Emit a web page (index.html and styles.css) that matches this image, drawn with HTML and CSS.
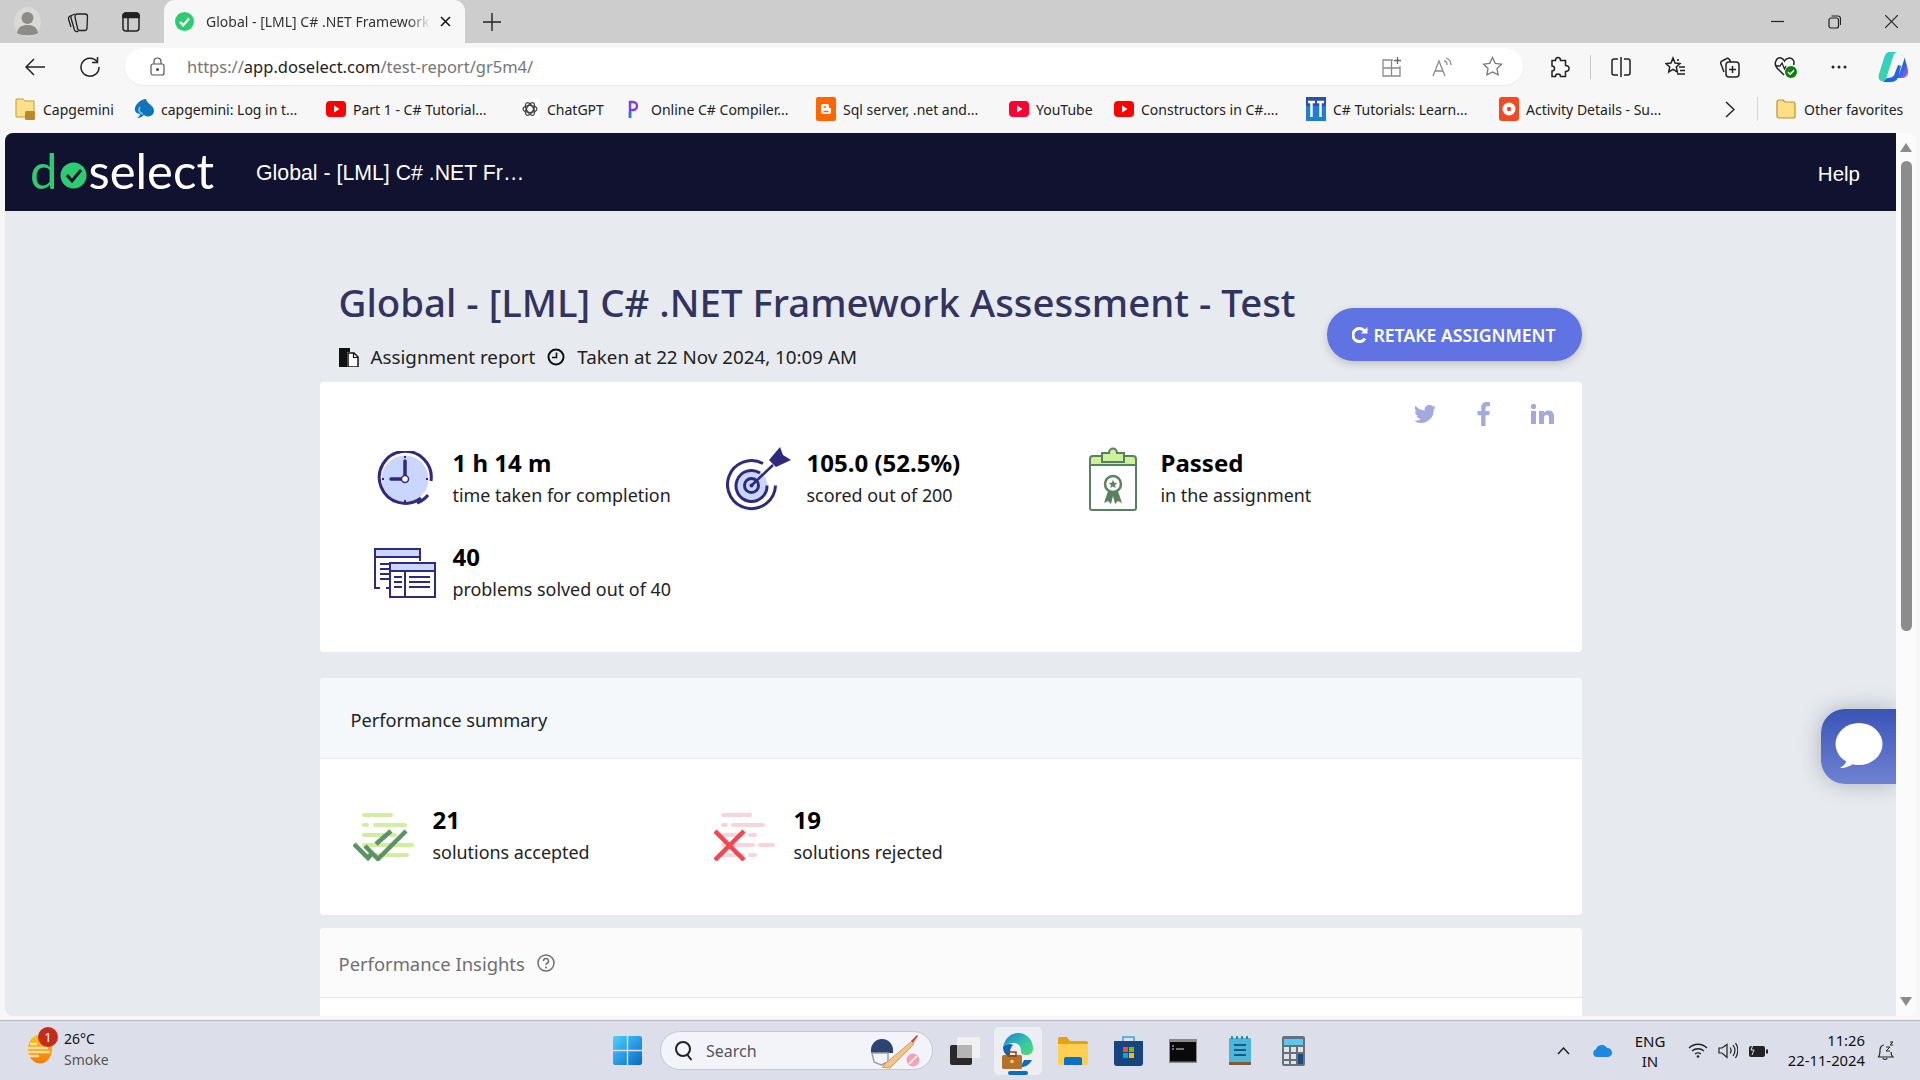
FILE: index.html
```html
<!DOCTYPE html>
<html lang="en">
<head>
  <meta charset="UTF-8" />
  <title>Global - [LML] C# .NET Framework Assessment - Test</title>
  <link rel="stylesheet" href="styles.css">
</head>
<body>
  <!-- browser chrome -->
  <div class="tabstrip">
    <svg class="ts-profile" width="27" height="30" viewBox="0 0 27 30"><ellipse cx="13.5" cy="15" rx="13.5" ry="15" fill="#d9d9d7"/><circle cx="13.5" cy="11" r="6" fill="#8d8c88"/><path d="M3 26c1-6 5-8 10.500-8s9.500 2 10.500 8c-3 3-18 3-21 0z" fill="#8d8c88"/></svg>
    <svg class="ts-coll" width="22" height="22" viewBox="0 0 22 22" fill="none" stroke="#222" stroke-width="1.300"><path d="M10 3h8a2.500 2.500 0 0 1 2.500 2.500L20 17a2.500 2.500 0 0 1-2.500 2.500H13A2.500 2.500 0 0 1 10.500 17L8 6a2.500 2.500 0 0 1 2-3z"/><path d="M8 3 5.500 4A2.500 2.500 0 0 0 4 7l3.500 12a2.500 2.500 0 0 0 3 1.500l1-.5"/><path d="M4 4.500 2.500 5.500A2.500 2.500 0 0 0 1.500 8l2.500 8"/></svg>
    <svg class="ts-vert" width="18" height="20" viewBox="0 0 18 20" fill="none" stroke="#222" stroke-width="1.500"><rect x="1" y="1" width="16" height="18" rx="3"/><path d="M6 5.500V19"/><path d="M1 4a3 3 0 0 1 3-3h10a3 3 0 0 1 3 3v1.500H1z" fill="#222"/></svg>
    <div class="tab">
      <svg width="19" height="19" viewBox="0 0 19 19"><circle cx="9.500" cy="9.500" r="9.500" fill="#2ecc71"/><path d="m5 10 3.200 3.200L14 6.500" fill="none" stroke="#fff" stroke-width="2.400"/></svg>
      <span class="tab-title">Global - [LML] C# .NET Framework</span>
      <svg width="11" height="11" viewBox="0 0 11 11" stroke="#111" stroke-width="1.500"><path d="m1 1 9 9M10 1l-9 9"/></svg>
    </div>
    <svg class="ts-plus" width="18" height="18" viewBox="0 0 18 18" stroke="#222" stroke-width="1.400"><path d="M9 0v18M0 9h18"/></svg>
    <div class="win-btns">
      <svg width="13" height="13" viewBox="0 0 13 13" stroke="#222" stroke-width="1.200"><path d="M0 6.500h13"/></svg>
      <svg width="13" height="14" viewBox="0 0 13 14" fill="none" stroke="#222" stroke-width="1.200"><rect x="1" y="3" width="9.500" height="10" rx="2"/><path d="M3.500 1H10a2.500 2.500 0 0 1 2.500 2.500V10"/></svg>
      <svg width="13" height="13" viewBox="0 0 13 13" stroke="#222" stroke-width="1.200"><path d="m0 0 13 13M13 0 0 13"/></svg>
    </div>
  </div>

  <div class="toolbar">
    <svg class="tb-back" width="20" height="18" viewBox="0 0 20 18" fill="none" stroke="#222" stroke-width="1.500"><path d="M20 9H1M9 1 1 9l8 8"/></svg>
    <svg class="tb-reload" width="20" height="20" viewBox="0 0 20 20" fill="none" stroke="#222" stroke-width="1.500"><path d="M17 4.500A9 9 0 1 0 19 10"/><path d="M17.500 0v5.500H12"/></svg>
    <div class="address">
      <svg width="15" height="19" viewBox="0 0 15 19" fill="none" stroke="#555" stroke-width="1.200"><rect x="1" y="7" width="13" height="11" rx="2"/><path d="M4 7V4.500a3.500 3.500 0 0 1 7 0V7"/><circle cx="7.500" cy="12.500" r="1" fill="#555"/></svg>
      <span class="url">https://<b>app.doselect.com</b>/test-report/gr5m4/</span>
      <div class="addr-tools">
        <svg width="20" height="20" viewBox="0 0 20 20" fill="none" stroke="#8a8a8a" stroke-width="1.300"><path d="M11 3H1v16h17V9M1 11h17M9.500 3v16"/><path d="M15.500 0v7M12 3.500h7" stroke="#666"/></svg>
        <svg width="20" height="20" viewBox="0 0 20 20" fill="none" stroke="#8a8a8a" stroke-width="1.300"><path d="m1 19 6-15 6 15M3 14h8"/><path d="M12 4c2 0 3 2 3 4M14 1c3 1 5 4 5 7"/></svg>
        <svg width="21" height="21" viewBox="0 0 21 21" fill="none" stroke="#777" stroke-width="1.300"><path d="m10.500 1.500 2.800 5.800 6.200.9-4.500 4.400 1.100 6.300-5.600-3-5.600 3 1.100-6.300L1.500 8.200l6.200-.9z"/></svg>
      </div>
    </div>
    <div class="tb-tools">
      <svg width="20" height="22" viewBox="0 0 20 22" fill="none" stroke="#222" stroke-width="1.500"><path d="M8 1.500c2 0 2.500 1.500 2.500 3h5v5c2.500 0 3.500 1 3.500 3s-1 3-3.500 3v5h-5c0-1.500-1-2.500-2.500-2.500s-2.500 1-2.500 2.500H2V15c1.500 0 2.500-1 2.500-2.500S3.500 10 2 10V4.500h3.500c0-1.500.5-3 2.500-3z"/></svg>
      <span class="tb-sep"></span>
      <svg width="20" height="20" viewBox="0 0 20 20" fill="none" stroke="#222" stroke-width="1.500"><path d="M10 0v20M7 2H3a2 2 0 0 0-2 2v12a2 2 0 0 0 2 2h4M13 2h4a2 2 0 0 1 2 2v12a2 2 0 0 1-2 2h-4"/></svg>
      <svg width="21" height="21" viewBox="0 0 21 21" fill="none" stroke="#222" stroke-width="1.500"><path d="m8 2 2 5 5 .6-3.700 3.400 1 5-4.300-2.600L3.700 16l1-5L1 7.600 6 7z"/><path d="M14 11h6M15 14.500h5M12 18h8M12 4h2"/></svg>
      <svg width="20" height="22" viewBox="0 0 20 22" fill="none" stroke="#222" stroke-width="1.500"><rect x="6" y="6" width="13" height="15" rx="3"/><path d="M12.500 10v7M9 13.500h7M6 3 2 5a2 2 0 0 0-1 3l3 8M6 3a2 2 0 0 1 3 0l2 3"/></svg>
      <svg width="23" height="22" viewBox="0 0 23 22" fill="none"><path d="M10 19 3 12C-1 7 3 1 7 2c2 .5 3 2 3.500 3C11 4 12 2.500 15 2c4-.5 6 4 4.500 7" stroke="#222" stroke-width="1.500"/><path d="M2 10h4l2-3 2.500 6 1.500-3" stroke="#222" stroke-width="1.300"/><circle cx="17" cy="16" r="6" fill="#107c10"/><path d="m14 16 2.200 2.200 3.800-4" stroke="#fff" stroke-width="1.500"/></svg>
      <svg width="16" height="4" viewBox="0 0 16 4" fill="#222"><circle cx="2" cy="2" r="1.500"/><circle cx="8" cy="2" r="1.500"/><circle cx="14" cy="2" r="1.500"/></svg>
      <svg class="tb-copilot" width="30" height="32" viewBox="0 0 30 32"><defs><linearGradient id="cpa" x1="0" y1="0" x2="1" y2="1"><stop offset="0" stop-color="#2cc3ee"/><stop offset=".55" stop-color="#3ad7a5"/><stop offset="1" stop-color="#1a78e0"/></linearGradient><linearGradient id="cpb" x1="0" y1="0" x2="1" y2="1"><stop offset="0" stop-color="#1f7ce0"/><stop offset=".6" stop-color="#2a5fe6"/><stop offset="1" stop-color="#b86be0"/></linearGradient></defs><path d="M20 3c4 0 6 2 7 5l3 11c1 5-2 8-6 8h-9c4 0 6-3 7-6l4-12c1-3-1-6-6-6z" fill="url(#cpb)"/><path d="M11 1h10c-4 0-5 2-6 5L9 25c-1 4-3 6-6 5-2-1-3-3-2-7L6 7c1-4 3-6 5-6z" fill="url(#cpa)"/><path d="M9 27c4 0 7-1 8-5l3-8 3 1-2 8c-1 5-3 8-8 8H5z" fill="#1e66dc"/></svg>
    </div>
  </div>

  <div class="favbar">
    <a class="fav"><svg width="21" height="24" viewBox="0 0 21 24"><path d="M1 2h7l2 2h9v16H1z" fill="#ffe08a" stroke="#c59a2d"/><rect x="10" y="14" width="10" height="9" rx="1.500" fill="#b98a2c"/></svg>Capgemini</a>
    <a class="fav"><svg width="20" height="20" viewBox="0 0 20 20"><path d="M12 0c1 5 8 6 8 12a6 6 0 0 1-10 4c-2 2-4 3-7 3 2-1 3-3 3-4-3 0-6-3-5-6 1-5 7-9 11-9z" fill="#0f74b8"/><path d="M9 15c-4-1-5-4-3-7" stroke="#62c0e8" stroke-width="2" fill="none"/></svg>capgemini: Log in t...</a>
    <a class="fav"><svg width="20" height="16" viewBox="0 0 20 16"><rect width="20" height="16" rx="4" fill="#f00"/><path d="m8 4.500 5.500 3.500L8 11.500z" fill="#fff"/></svg>Part 1 - C# Tutorial...</a>
    <a class="fav"><svg width="20" height="20" viewBox="0 0 20 20" fill="none" stroke="#444" stroke-width="1.200"><rect width="20" height="20" rx="3" fill="#fff" stroke="none"/><circle cx="10" cy="10" r="3.500"/><ellipse cx="10" cy="10" rx="7" ry="3.500"/><ellipse cx="10" cy="10" rx="7" ry="3.500" transform="rotate(60 10 10)"/><ellipse cx="10" cy="10" rx="7" ry="3.500" transform="rotate(120 10 10)"/></svg>ChatGPT</a>
    <a class="fav fav-p"><svg width="12" height="20" viewBox="0 0 12 20" fill="none" stroke-width="2.400"><path d="M3 19V3h3a3.500 3.500 0 0 1 0 8H3" stroke="#7a3cf0"/><path d="M3 19v-6" stroke="#2c6cf0"/></svg>Online C# Compiler...</a>
    <a class="fav"><svg width="20" height="24" viewBox="0 0 20 24"><rect width="20" height="24" rx="2" fill="#f60"/><path d="M6 7h5a2 2 0 0 1 2 2v2h1a1 1 0 0 1 1 1v3a2 2 0 0 1-2 2H7a2 2 0 0 1-2-2V8z" fill="#fff"/><path d="M7.500 10H10M7.500 14.500h5" stroke="#f60" stroke-width="1.500"/></svg>Sql server, .net and...</a>
    <a class="fav"><svg width="20" height="16" viewBox="0 0 20 16"><rect width="20" height="16" rx="4" fill="#f03"/><path d="m8 4.500 5.500 3.500L8 11.500z" fill="#fff"/></svg>YouTube</a>
    <a class="fav"><svg width="20" height="16" viewBox="0 0 20 16"><rect width="20" height="16" rx="4" fill="#f00"/><path d="m8 4.500 5.500 3.500L8 11.500z" fill="#fff"/></svg>Constructors in C#....</a>
    <a class="fav"><svg width="20" height="24" viewBox="0 0 20 24"><rect width="20" height="24" fill="#1e7fd0"/><rect width="20" height="9" fill="#2a4fa8"/><path d="M2 5h7M5.500 5v15M11 5h7M14.500 5v15" stroke="#fff" stroke-width="2.400"/></svg>C# Tutorials: Learn...</a>
    <a class="fav"><svg width="20" height="24" viewBox="0 0 20 24"><rect width="20" height="24" rx="3" fill="#ee4b24"/><circle cx="10" cy="12" r="6.500" fill="#fff"/><circle cx="10" cy="12" r="2.200" fill="#ee4b24"/></svg>Activity Details - Su...</a>
    <svg class="fav-more" width="10" height="17" viewBox="0 0 10 17" fill="none" stroke="#222" stroke-width="1.500"><path d="m1 1 8 7.500L1 16"/></svg>
    <span class="fav-sep"></span>
    <a class="fav fav-other"><svg width="20" height="20" viewBox="0 0 20 20"><path d="M1 3a2 2 0 0 1 2-2h4l2 2h8a2 2 0 0 1 2 2v12a2 2 0 0 1-2 2H3a2 2 0 0 1-2-2z" fill="#ffdf85" stroke="#bf9226" stroke-width="1.200"/></svg>Other favorites</a>
  </div>

  <!-- the page -->
  <div class="viewport">
    <div class="page">
      <header class="nav">
        <div class="logo"><span class="logo-d">d</span><svg class="logo-o" width="27" height="27" viewBox="0 0 27 27"><circle cx="13.500" cy="13.500" r="13" fill="#2ecc71"/><path d="m7 13 5 6 9-11" fill="none" stroke="#10122f" stroke-width="3"/></svg><span>select</span></div>
        <div class="nav-title">Global - [LML] C# .NET Fr…</div>
        <div class="nav-help">Help</div>
      </header>

      <main class="content">
        <div class="report-head">
          <div>
            <h1>Global - [LML] C# .NET Framework Assessment - Test</h1>
            <div class="meta">
              <svg width="20" height="20" viewBox="0 0 20 20"><path d="M0 1h11v4H8v15H0z" fill="#111"/><path d="M9 6h6l4 4v10H9z" fill="#fff" stroke="#111" stroke-width="1.500"/><path d="M14.500 6v4.500H19" fill="none" stroke="#111" stroke-width="1.200"/></svg>
              <span>Assignment report</span>
              <svg class="meta-clock" width="18" height="18" viewBox="0 0 18 18" fill="none" stroke="#111" stroke-width="2"><circle cx="9" cy="9" r="7.500"/><path d="M9.500 4.500V9.500H5" stroke-width="1.600"/></svg>
              <span>Taken at 22 Nov 2024, 10:09 AM</span>
            </div>
          </div>
          <button class="retake"><svg width="16" height="18" viewBox="0 0 16 18" fill="none" stroke="#fff" stroke-width="3"><path d="M13 12.500A6.500 6.500 0 1 1 12.500 5"/><path d="M15.500 1v6.500H9" fill="#fff" stroke="none"/></svg>RETAKE ASSIGNMENT</button>
        </div>

        <section class="card stats-card">
          <div class="socials">
            <svg width="22" height="18" viewBox="0 0 22 18" fill="#a3a9de"><path d="M22 2.100c-.8.400-1.700.6-2.600.7.900-.6 1.600-1.400 2-2.500-.9.500-1.800.9-2.900 1.100A4.500 4.500 0 0 0 10.800 5.600C7.100 5.400 3.800 3.600 1.500.8c-1.200 2-.6 4.700 1.400 6-.7 0-1.400-.2-2-.6 0 2.200 1.500 4.100 3.600 4.500-.7.200-1.400.2-2 .1.600 1.800 2.200 3.100 4.200 3.100A9 9 0 0 1 0 15.800 12.800 12.800 0 0 0 19.700 4.500c.9-.6 1.700-1.400 2.300-2.400z"/></svg>
            <svg width="13" height="24" viewBox="0 0 13 24" fill="#a3a9de"><path d="M8.500 24V13.300h3.700l.6-4.300H8.500V6.400c0-1.200.4-2.100 2.100-2.100H13V.4C12.500.3 11.200 0 9.700 0 6.400 0 4.200 2 4.200 5.800V9H.5v4.300h3.700V24z"/></svg>
            <svg width="23" height="20" viewBox="0 0 23 20" fill="#a3a9de"><rect x="0" y="7" width="5" height="13"/><circle cx="2.500" cy="2.500" r="2.600"/><path d="M8 7h4.800v2c.8-1.300 2.300-2.400 4.600-2.400 4.300 0 5.600 2.700 5.600 6.700V20h-5v-6c0-1.800-.4-3.300-2.300-3.300S13 12.200 13 14v6H8z"/></svg>
          </div>
          <div class="stats">
            <div class="stat">
              <svg class="stat-icon" width="56" height="56" viewBox="0 0 56 56" fill="none">
                <circle cx="28" cy="28" r="23.500" fill="#cbd6ff"/>
                <path d="M44 47A26 26 0 1 1 54 30" stroke="#2f2a7c" stroke-width="3"/>
                <path d="M40 52a26 26 0 0 0 11-8" stroke="#2f2a7c" stroke-width="3"/>
                <path d="M28 10v14M14 28h10" stroke="#2f2a7c" stroke-width="3.500" stroke-linecap="round"/>
                <circle cx="28" cy="28" r="3.500" fill="#fff" stroke="#2f2a7c" stroke-width="1.500"/>
                <path d="M28 5v2M28 49v2M5 28h2M49 28h2" stroke="#2f2a7c" stroke-width="2"/>
              </svg>
              <div class="stat-text"><strong>1 h 14 m</strong><span>time taken for completion</span></div>
            </div>
            <div class="stat">
              <svg class="stat-icon" width="66" height="66" viewBox="0 0 66 66" fill="none">
                <circle cx="25.500" cy="39.500" r="16" fill="#cbd6ff"/>
                <path d="M37 17.500A24 24 0 1 0 49.500 39.500" stroke="#2f2a7c" stroke-width="3"/>
                <path d="M34 27A15.500 15.500 0 1 0 41 39.500" stroke="#2f2a7c" stroke-width="3"/>
                <circle cx="25.500" cy="39.500" r="7" fill="#cbd6ff" stroke="#2f2a7c" stroke-width="3"/>
                <circle cx="25.500" cy="39.500" r="2" fill="#2f2a7c"/>
                <path d="M25.500 39.500 47 19" stroke="#2f2a7c" stroke-width="2.500"/>
                <path d="M43 14 54 1l3 8 8 5-15 7z" fill="#2f2a7c"/>
              </svg>
              <div class="stat-text"><strong>105.0 (52.5%)</strong><span>scored out of 200</span></div>
            </div>
            <div class="stat">
              <svg class="stat-icon" width="48" height="64" viewBox="0 0 48 64" fill="none" stroke="#5a8060" stroke-width="2">
                <path d="M1 18V12a3 3 0 0 1 3-3h40a3 3 0 0 1 3 3v6z" fill="#cff09b"/>
                <path d="M13 15V6h7c0-6 8-6 8 0h7v9z" fill="#cff09b"/>
                <path d="M1 18v43a2 2 0 0 0 2 2h42a2 2 0 0 0 2-2V18"/>
                <circle cx="24" cy="37" r="8" stroke-width="2.500"/>
                <path d="m24 33 1.300 2.800 3 .3-2.300 2 .7 3-2.700-1.600-2.700 1.600.7-3-2.300-2 3-.3z" fill="#5a8060" stroke="none"/>
                <path d="m19 44-4 12 4-2 3 3 2-8 2 8 3-3 4 2-4-12" fill="#5a8060" stroke="none"/>
              </svg>
              <div class="stat-text"><strong>Passed</strong><span>in the assignment</span></div>
            </div>
            <div class="stat">
              <svg class="stat-icon" width="62" height="50" viewBox="0 0 62 50" fill="none" stroke="#2f2a7c" stroke-width="2">
                <path d="M46 13V1H1v39h5M12 40h3" />
                <rect x="2" y="2" width="43" height="7" fill="#cbd6ff" stroke="none"/>
                <path d="M1 9h45M6 16h9M6 21h9M6 26h9M6 31h9"/>
                <path d="M61 40v9H16V15h45v29" fill="#fff"/>
                <rect x="17" y="16" width="43" height="7" fill="#cbd6ff" stroke="none"/>
                <path d="M16 23h45M31 23v26M20 29h8M20 34h8M20 39h8M35 29h21M35 34h21M35 39h21"/>
              </svg>
              <div class="stat-text"><strong>40</strong><span>problems solved out of 40</span></div>
            </div>
          </div>
        </section>

        <section class="card summary-card">
          <div class="card-head">Performance summary</div>
          <div class="summary">
            <div class="stat">
              <svg class="sum-icon" width="62" height="48" viewBox="0 0 62 48" fill="none" stroke="#d0ee9f" stroke-width="4" stroke-linecap="round">
                <path d="M11 2h27M11 12h3M22 12h30M11 22h20M38 22h4M11 32h48M11 42h4M24 42h30M44 42h6"/>
                <path d="M1 31l14 14 5-6M12 33l13 13 28-28M23 31l15-13" stroke="#5c9265" stroke-width="4.500" stroke-linecap="butt"/>
              </svg>
              <div class="stat-text"><strong>21</strong><span>solutions accepted</span></div>
            </div>
            <div class="stat">
              <svg class="sum-icon" width="62" height="48" viewBox="0 0 62 48" fill="none" stroke="#f8d5dd" stroke-width="4" stroke-linecap="round">
                <path d="M9 2h27M9 12h3M19 12h30M9 22h20M36 22h5M9 32h30M46 32h13M9 42h20M36 42h5"/>
                <path d="M1 18l29 29M30 18 1 47" stroke="#f2474f" stroke-width="4.500" stroke-linecap="butt"/>
              </svg>
              <div class="stat-text"><strong>19</strong><span>solutions rejected</span></div>
            </div>
          </div>
        </section>

        <section class="card insights-card">
          <div class="insights-head">Performance Insights
            <svg width="18" height="18" viewBox="0 0 18 18" fill="none" stroke="#6f6f6f" stroke-width="1.500"><circle cx="9" cy="9" r="8"/><path d="M6.500 7a2.500 2.500 0 1 1 3.500 2.300c-.7.300-1 .8-1 1.700"/><circle cx="9" cy="13.500" r="1" fill="#6f6f6f" stroke="none"/></svg>
          </div>
          <div class="insights-body"></div>
        </section>
      </main>

      <div class="chat"><svg width="48" height="46" viewBox="0 0 48 46"><ellipse cx="24" cy="21" rx="23.500" ry="21" fill="#fff"/><path d="M12 34c0 5-2 8-7 11 6 0 12-2 16-7z" fill="#fff"/></svg></div>
    </div>
    <div class="scrollbar">
      <span class="sb-up"></span>
      <span class="sb-thumb"></span>
      <span class="sb-down"></span>
    </div>
  </div>

  <!-- windows taskbar -->
  <footer class="taskbar">
    <div class="weather">
      <div class="weather-icon">
        <svg width="28" height="30" viewBox="0 0 28 30"><defs><linearGradient id="sun" x1="0" y1="0" x2="0" y2="1"><stop offset="0" stop-color="#ffc814"/><stop offset="1" stop-color="#f57a0a"/></linearGradient></defs><ellipse cx="15" cy="15" rx="12" ry="14.500" fill="url(#sun)"/><path d="M5 10h7M1 18h24M3 14h20M2 22h12" stroke="#f6dca6" stroke-width="2.500"/></svg>
        <span class="weather-badge">1</span>
      </div>
      <div class="weather-text"><span>26°C</span><span class="weather-sub">Smoke</span></div>
    </div>
    <div class="task-icons">
      <svg width="29" height="29" viewBox="0 0 29 29"><defs><linearGradient id="win" x1="0" y1="0" x2="1" y2="1"><stop offset="0" stop-color="#4dd0ff"/><stop offset="1" stop-color="#0669c9"/></linearGradient></defs><path d="M0 2a2 2 0 0 1 2-2h11.800v13.800H0zM15.200 0H27a2 2 0 0 1 2 2v11.800H15.200zM0 15.200h13.800V29H2a2 2 0 0 1-2-2zM15.200 15.200H29V27a2 2 0 0 1-2 2H15.200z" fill="url(#win)"/></svg>
      <div class="search">
        <svg width="18" height="20" viewBox="0 0 18 20" fill="none" stroke="#222" stroke-width="2"><circle cx="8" cy="8" r="7"/><path d="m12.500 14 4 5"/></svg>
        <span>Search</span>
        <svg class="search-art" width="50" height="36" viewBox="0 0 50 36"><path d="M1 17a11 11 0 0 1 22 0v3H1z" fill="#2d4373"/><path d="M2 20h16v9l-7 3-7-3z" fill="none" stroke="#a0a0a0" stroke-width="1.500"/><path d="M12 34 16 30 42 8l2 3-24 24z" fill="#f0c48a" stroke="#d99a55"/><path d="m41 8 6-6 1 1-5 7z" fill="#c84a3a"/><circle cx="43" cy="27" r="6.500" fill="#f4a3b4"/><path d="m39 31 8-8" stroke="#fff" stroke-width="1.500"/></svg>
      </div>
      <svg width="30" height="28" viewBox="0 0 30 28"><rect x="7" y="0" width="23" height="21" rx="2" fill="#f3f3f3" opacity=".9"/><rect x="0" y="8" width="22" height="20" rx="2" fill="#2a2a2a"/><rect x="7" y="8" width="15" height="13" fill="#b5b5b5"/></svg>
      <div class="task-active">
        <svg width="32" height="36" viewBox="0 0 32 36"><defs><linearGradient id="edge" x1="0" y1="0" x2="1" y2="1"><stop offset="0" stop-color="#1b7fd4"/><stop offset=".6" stop-color="#37c9a7"/><stop offset="1" stop-color="#59d66b"/></linearGradient></defs><path d="M1 14C3 5 9 0 16 0c9 0 15 7 15 15 0 5-3 7-6 7-4 0-6-1-6-4 0-5-3-8-7-8-5 0-9 2-11 4z" fill="url(#edge)"/><path d="M1 14c3-3 7-4 10-2-3 3-4 8-2 13-5-2-8-6-8-11z" fill="#1264b3"/><path d="M22 27h8c-3 6-9 8-14 7 3-1 5-4 6-7z" fill="#0f6cbd"/><rect x="0" y="22" width="20" height="14" rx="1.500" fill="#b5722a"/><rect x="6" y="19" width="8" height="4" fill="none" stroke="#7d4a18" stroke-width="1.500"/><rect x="8.500" y="27" width="3" height="3" fill="#f3d27a"/></svg>
        <span class="task-dot"></span>
      </div>
      <svg width="30" height="28" viewBox="0 0 30 28"><path d="M0 2a2 2 0 0 1 2-2h7l3 4h16a2 2 0 0 1 2 2v4H0z" fill="#e5a210"/><path d="M0 7h30v19a2 2 0 0 1-2 2H2a2 2 0 0 1-2-2z" fill="#ffd04f"/><path d="M6 28v-6a2 2 0 0 1 2-2h14a2 2 0 0 1 2 2v6z" fill="#0f6fc4"/></svg>
      <svg width="29" height="30" viewBox="0 0 29 30"><path d="M9 5V1h11v4" fill="none" stroke="#2ea8dc" stroke-width="1.500"/><path d="M0 5h29v22a3 3 0 0 1-3 3H3a3 3 0 0 1-3-3z" fill="#17457f"/><rect x="9" y="11" width="5" height="5" fill="#f25022"/><rect x="15" y="11" width="5" height="5" fill="#7fba00"/><rect x="9" y="17" width="5" height="5" fill="#00a4ef"/><rect x="15" y="17" width="5" height="5" fill="#ffb900"/></svg>
      <svg width="28" height="24" viewBox="0 0 28 24"><rect width="28" height="24" fill="#8a8a8a"/><rect x="1" y="3" width="26" height="19.500" fill="#0a0a0a"/><path d="M3 7h2M3 10h2M7 10h8" stroke="#ddd" stroke-width="1"/></svg>
      <svg class="task-notepad" width="22" height="29" viewBox="0 0 22 29"><rect x="0" y="2" width="22" height="25" rx="1" fill="#4fb6da"/><path d="M3 0v3M8 0v3M13 0v3M18 0v3" stroke="#1d5f8a" stroke-width="1.500"/><path d="M5 9h12M5 14h12M5 19h12" stroke="#155a8a" stroke-width="2"/><rect x="0" y="26" width="22" height="3" fill="#8a5a30"/></svg>
      <svg class="task-calc" width="23" height="30" viewBox="0 0 23 30"><rect width="23" height="30" rx="2" fill="#6a7078"/><rect x="2" y="3" width="19" height="6" fill="#5cc8ee"/><path d="M2 11h5v5H2zM9 11h5v5H9zM2 18h5v5H2zM9 18h5v5H9zM2 25h5v3H2zM9 25h5v3H9zM16 11h5v5h-5z" fill="#dfe3e8"/><rect x="16" y="18" width="5" height="10" fill="#1c4a85"/></svg>
    </div>
    <div class="tray">
      <svg class="tray-up" width="13" height="8" viewBox="0 0 13 8" fill="none" stroke="#222" stroke-width="1.500"><path d="m1 7 5.500-6L12 7"/></svg>
      <svg class="tray-cloud" width="20" height="13" viewBox="0 0 20 13"><path d="M4 13a4 4 0 0 1-1-7.800A6 6 0 0 1 14 4a4.500 4.500 0 0 1 5 4.500A4.500 4.500 0 0 1 15 13z" fill="#1e88e0"/></svg>
      <div class="tray-lang"><span>ENG</span><span>IN</span></div>
      <svg width="20" height="15" viewBox="0 0 20 15" fill="none" stroke="#222" stroke-width="1.300"><path d="M1 5c5-5 13-5 18 0M4 8c3.500-3 8.500-3 12 0M7 11c2-1.500 4-1.500 6 0"/><circle cx="10" cy="13.500" r="1.300" fill="#222" stroke="none"/></svg>
      <svg width="20" height="17" viewBox="0 0 20 17" fill="none" stroke="#222" stroke-width="1.200"><path d="M1 6v5h3l5 4.500v-13L4 6z"/><path d="M12 5.500c1.500 2 1.500 4 0 6M15 3c2.500 3.500 2.500 7.500 0 11M17.500 1c3 4.500 3 10 0 15"/></svg>
      <svg width="20" height="17" viewBox="0 0 20 17"><rect x="1" y="4" width="16" height="11" rx="2" fill="#222"/><rect x="18" y="7.500" width="2" height="4" fill="#222"/><path d="M6 0 3 8h3l-2 5" fill="none" stroke="#dcdfea" stroke-width="1"/></svg>
      <div class="tray-clock"><span>11:26</span><span>22-11-2024</span></div>
      <svg class="tray-bell" width="17" height="20" viewBox="0 0 17 20" fill="none" stroke="#222" stroke-width="1.200"><path d="M1 16c2-1 2-4 2-7 0-3 2-5 4-5M9 16H1M9 16h7c-1-1-2-2-2-5"/><path d="M6 17c0 2 4 2 4 0"/><path d="M9 6h4l-4 4h4M13 1h3l-3 3h3" stroke-width="1"/></svg>
    </div>
  </footer>
</body>
</html>
```

FILE: styles.css
```css
* {
  box-sizing: border-box;
}
body {
  margin: 0;
  width: 1920px;
  height: 1080px;
  overflow: hidden;
  background: #f7f7f7;
  color: #111;
  font-family: "Noto Sans", "Open Sans", sans-serif;
  display: flex;
  flex-direction: column;
}
svg {
  display: block;
  flex: none;
}

/* tab strip */
.tabstrip {
  height: 43px;
  background: #cdcdcd;
  display: flex;
  align-items: center;
}
.ts-profile {
  margin-left: 14px;
}
.ts-coll {
  margin-left: 26px;
}
.ts-vert {
  margin-left: 33px;
}
.tab {
  margin-left: 24px;
  width: 301px;
  height: 43px;
  background: #f7f7f7;
  border-radius: 11px 11px 0 0;
  display: flex;
  align-items: center;
  padding: 0 14px 0 11px;
}
.tab-title {
  flex: 1;
  margin: 0 9px 0 12px;
  font-size: 14px;
  color: #333;
  white-space: nowrap;
  overflow: hidden;
  -webkit-mask-image: linear-gradient(90deg, #000 90%, transparent);
  mask-image: linear-gradient(90deg, #000 90%, transparent);
}
.ts-plus {
  margin-left: 18px;
}
.win-btns {
  margin-left: auto;
  padding-right: 22px;
  display: flex;
  gap: 44px;
}

/* toolbar */
.toolbar {
  height: 42px;
  display: flex;
  align-items: center;
  padding-top: 5px;
}
.tb-back {
  margin-left: 25px;
}
.tb-reload {
  margin-left: 35px;
}
.address {
  margin-left: 25px;
  width: 1398px;
  height: 37px;
  background: #fff;
  border-radius: 19px;
  box-shadow: 0 1px 2px rgba(0, 0, 0, 0.06);
  display: flex;
  align-items: center;
  padding-left: 25px;
}
.url {
  margin-left: 22px;
  font-size: 16.500px;
  color: #767676;
}
.url b {
  font-weight: 400;
  color: #222;
}
.addr-tools {
  margin-left: auto;
  padding-right: 20px;
  display: flex;
  align-items: center;
  gap: 30px;
}
.tb-tools {
  margin-left: 27px;
  display: flex;
  align-items: center;
  gap: 34px;
}
.tb-sep {
  width: 1px;
  height: 24px;
  background: #c8c8c8;
  margin: 0 -14px 0 -14px;
}
.tb-copilot {
  margin-left: -3px;
}

/* favorites bar */
.favbar {
  height: 48px;
  padding-left: 15px;
  display: grid;
  grid-template-columns: 119px 192px 194px 107px 189px 193px 105px 192px 193px 226px 32px 19px auto;
  align-items: center;
}
.fav {
  display: flex;
  align-items: center;
  gap: 7px;
  font-size: 14px;
  color: #222;
  white-space: nowrap;
}
.fav-p {
  gap: 12px;
}
.fav-sep {
  width: 1px;
  height: 24px;
  background: #d4d4d4;
}
.fav-other {
  gap: 8px;
}

/* page */
.viewport {
  height: 887px;
  padding: 0 4px 4px 5px;
  display: flex;
}
.page {
  position: relative;
  flex: 1;
  background: #e7ebef;
  border-radius: 8px 0 0 8px;
  overflow: hidden;
}
.nav {
  height: 78px;
  background: #10122f;
  color: #fff;
  display: flex;
  align-items: center;
  padding: 0 36px 0 25px;
  font-family: "Liberation Sans", sans-serif;
  font-size: 21.300px;
}
.logo {
  width: 226px;
  height: 78px;
  padding-bottom: 5px;
  display: flex;
  align-items: center;
  font-family: Lato, sans-serif;
  font-size: 49px;
}
.logo-d {
  color: #2ecc71;
  margin-right: 3px;
}
.logo-o {
  margin: 11px 1px 0 0;
}
.nav-title,
.nav-help {
  padding-top: 3px;
}
.nav-help {
  margin-left: auto;
  font-size: 20.500px;
}
.content {
  width: 1262px;
  margin: 0 auto;
}
.report-head {
  display: flex;
  justify-content: space-between;
  padding: 65px 0 11px 19px;
}
h1 {
  margin: 0;
  font-size: 38.400px;
  line-height: 52px;
  font-weight: 500;
  color: #33335f;
  white-space: nowrap;
}
.meta {
  margin-top: 15px;
  height: 28px;
  display: flex;
  align-items: center;
  font-size: 18.800px;
  color: #222;
  white-space: nowrap;
}
.meta svg {
  margin-right: 12px;
}
.meta .meta-clock {
  margin-left: 12px;
}
.retake {
  width: 255px;
  height: 53px;
  margin-top: 32px;
  border: none;
  border-radius: 27px;
  background: #5f73e3;
  color: #fff;
  box-shadow: 0 3px 8px rgba(0, 0, 0, 0.18);
  font: 600 17.600px "Noto Sans", sans-serif;
  display: flex;
  align-items: center;
  justify-content: center;
  gap: 5px;
}
.card {
  background: #fff;
  border-radius: 4px;
}
.stats-card {
  height: 270px;
  padding-top: 19px;
}
.socials {
  height: 26px;
  padding-right: 28px;
  display: flex;
  justify-content: flex-end;
  align-items: center;
  gap: 41px;
}
.stats {
  margin-top: 20px;
  padding-left: 52px;
  display: grid;
  grid-template-columns: repeat(3, 354px);
  grid-auto-rows: 66px;
  row-gap: 28px;
}
.stat {
  display: flex;
  align-items: center;
}
.stat-icon {
  width: 66px;
  margin: 0 15px 3px 0;
}
.stat-text {
  padding-top: 1px;
  display: flex;
  flex-direction: column;
  white-space: nowrap;
}
.stat-text strong {
  font-size: 24px;
  line-height: 28px;
  font-weight: 700;
  color: #000;
}
.stat-text span {
  font-size: 17.900px;
  line-height: 36px;
  color: #222;
}
.summary-card {
  margin-top: 26px;
  height: 237px;
}
.card-head {
  height: 81px;
  padding: 3px 0 0 31px;
  background: #f5f8fb;
  border-bottom: 1px solid #e8ebee;
  border-radius: 4px 4px 0 0;
  display: flex;
  align-items: center;
  font-size: 18.200px;
  color: #222;
}
.summary {
  height: 156px;
  padding-left: 33px;
  display: grid;
  grid-template-columns: repeat(2, 361px);
}
.sum-icon {
  margin-right: 18px;
}
.insights-card {
  margin-top: 13px;
}
.insights-head {
  height: 70px;
  padding: 1px 0 0 19px;
  background: #fbfbfb;
  border-bottom: 1px solid #e2e2e2;
  border-radius: 4px 4px 0 0;
  display: flex;
  align-items: center;
  gap: 12px;
  font-size: 18.400px;
  color: #6f6f6f;
}
.insights-body {
  height: 40px;
}
.chat {
  position: absolute;
  right: 0;
  top: 576px;
  width: 75px;
  height: 75px;
  border-radius: 24px 0 0 24px;
  background: linear-gradient(#3a54b6, #6f82d2);
  box-shadow: 0 0 22px rgba(30, 40, 70, 0.3);
  padding: 14px 0 0 14px;
}

/* scrollbar */
.scrollbar {
  width: 20px;
  background: #fbfbfb;
  border-radius: 0 8px 8px 0;
  display: flex;
  flex-direction: column;
  align-items: center;
  padding: 10px 0;
}
.sb-up,
.sb-down {
  width: 0;
  height: 0;
  border-left: 6.5px solid transparent;
  border-right: 6.5px solid transparent;
}
.sb-up {
  border-bottom: 9px solid #8c8c8c;
}
.sb-down {
  margin-top: auto;
  border-top: 9px solid #8c8c8c;
}
.sb-thumb {
  width: 11px;
  height: 470px;
  margin-top: 9px;
  background: #8c8c8c;
  border-radius: 6px;
}

/* taskbar */
.taskbar {
  flex: 1;
  background: #dcdfea;
  border-top: 1px solid #b4b6c4;
  display: flex;
  align-items: center;
}
.weather {
  width: 613px;
  padding-left: 25px;
  display: flex;
  align-items: center;
  gap: 11px;
}
.weather-icon {
  position: relative;
  margin-bottom: 4px;
}
.weather-badge {
  position: absolute;
  top: -7px;
  right: -5px;
  width: 20px;
  height: 20px;
  border-radius: 50%;
  background: #c42b1c;
  color: #fff;
  font-size: 13px;
  line-height: 20px;
  text-align: center;
}
.weather-text {
  padding-bottom: 4px;
  display: flex;
  flex-direction: column;
  font-size: 14px;
  line-height: 21px;
}
.weather-sub {
  color: #555;
}
.task-icons {
  display: flex;
  align-items: center;
  gap: 26px;
}
.search {
  margin: 0 -9px 0 -8px;
  width: 273px;
  height: 39px;
  background: #f3f4f9;
  border: 1px solid #c4c6d2;
  border-radius: 20px;
  display: flex;
  align-items: center;
  padding-left: 14px;
  font-size: 16px;
  color: #555;
  gap: 13px;
}
.search-art {
  margin-left: auto;
  margin-right: 12px;
}
.task-active {
  position: relative;
  width: 48px;
  height: 48px;
  margin: 0 -10px 0 -12px;
  background: #eceef4;
  border-radius: 5px;
  display: flex;
  justify-content: center;
  padding-top: 6px;
}
.task-dot {
  position: absolute;
  left: 14px;
  bottom: 0;
  width: 20px;
  height: 4px;
  border-radius: 2px;
  background: #0f6cbd;
}
.task-notepad {
  margin-left: 6px;
}
.task-calc {
  margin-left: 5px;
}
.tray {
  margin-left: auto;
  padding-right: 26px;
  display: flex;
  align-items: center;
  gap: 10px;
}
.tray-cloud {
  margin: 0 1px 0 13px;
}
.tray-lang {
  width: 52px;
  margin-right: 2px;
  display: flex;
  flex-direction: column;
  align-items: center;
  font-size: 15px;
  line-height: 20px;
}
.tray-clock {
  width: 98px;
  margin-left: -11px;
  padding-bottom: 2px;
  display: flex;
  flex-direction: column;
  align-items: flex-end;
  font-size: 14.800px;
  line-height: 20px;
}
.tray-bell {
  margin-left: 2px;
}
```
